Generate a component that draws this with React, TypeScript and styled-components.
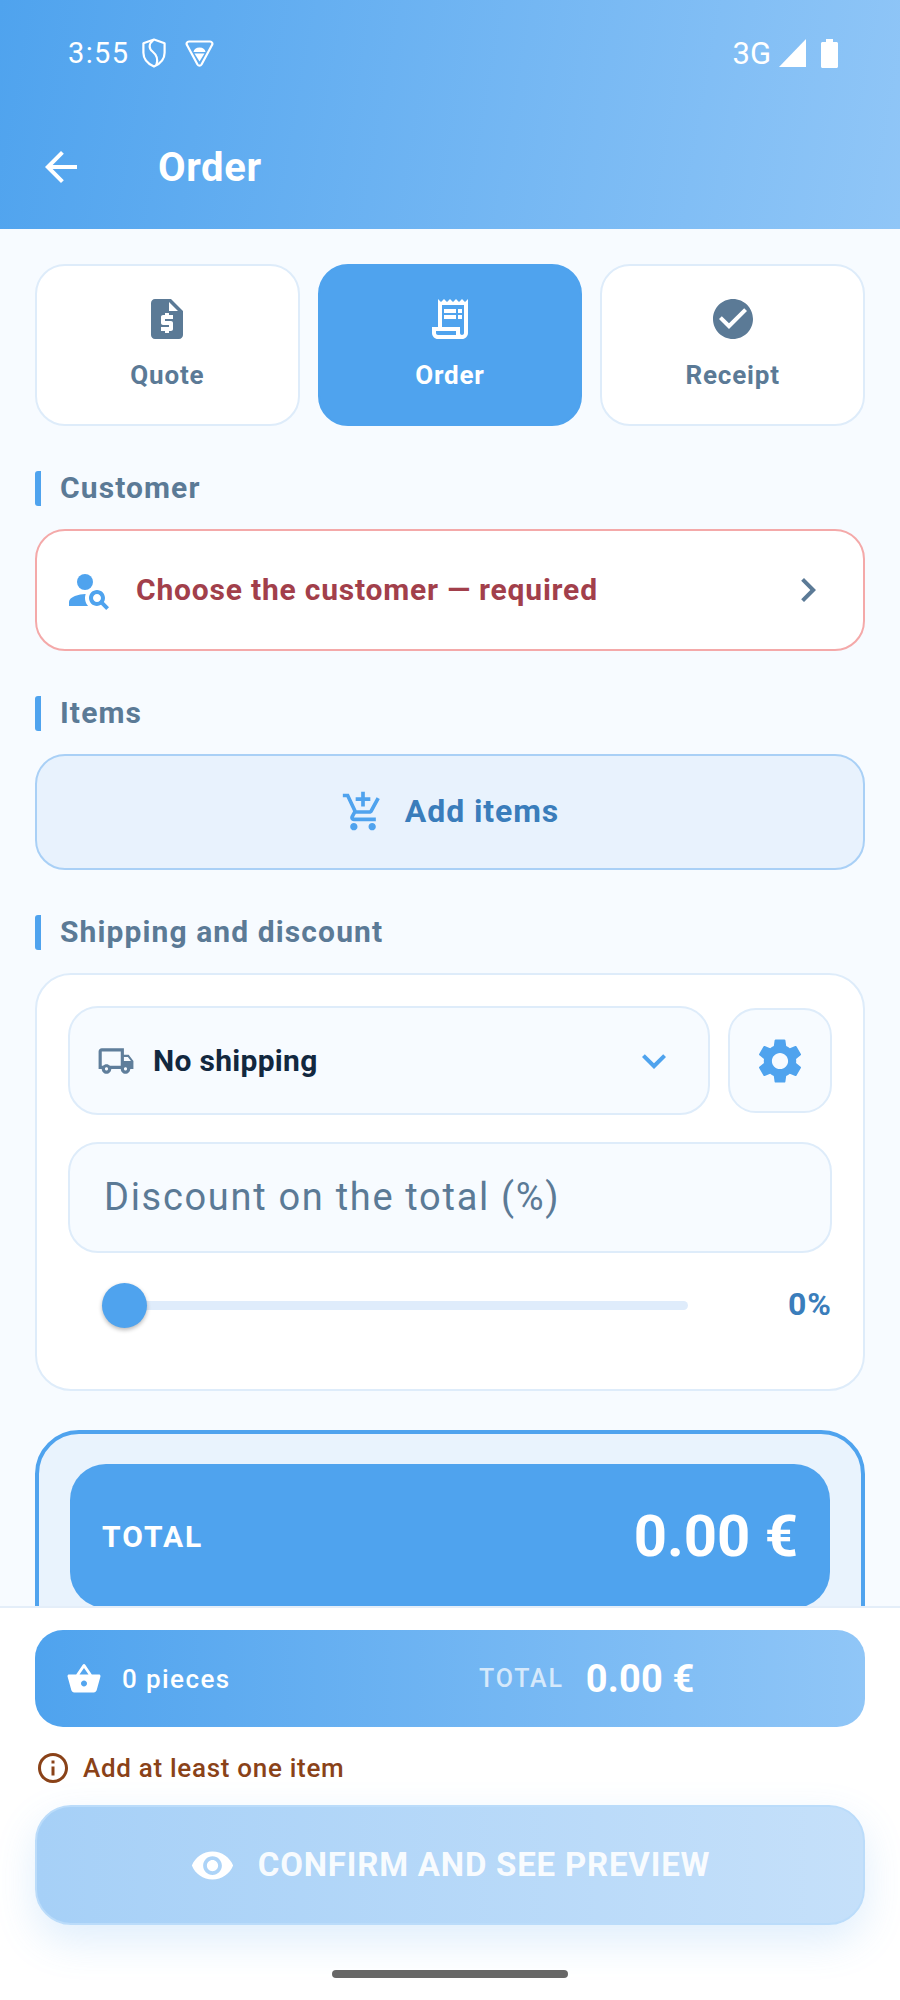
import React from "react";
import styled, { createGlobalStyle } from "styled-components";
import {
  MdArrowBack,
  MdCheckCircle,
  MdChevronRight,
  MdInfoOutline,
  MdKeyboardArrowDown,
  MdOutlineAddShoppingCart,
  MdOutlineLocalShipping,
  MdOutlineReceiptLong,
  MdPersonSearch,
  MdRequestQuote,
  MdSettings,
  MdShoppingBasket,
  MdVisibility,
} from "react-icons/md";

const GlobalStyle = createGlobalStyle`
  html, body {
    margin: 0;
    padding: 0;
    background: #fff;
  }
  * {
    box-sizing: border-box;
  }
`;

const tabs = [
  { label: "Quote", icon: MdRequestQuote },
  { label: "Order", icon: MdOutlineReceiptLong, active: true },
  { label: "Receipt", icon: MdCheckCircle },
];

const ShieldIcon = () => (
  <svg width="24" height="30" viewBox="0 0 24 30" fill="none" stroke="#fff" strokeWidth="2.2" strokeLinejoin="round" strokeLinecap="round">
    <path d="M12 1.5 22.6 5.2v9.6c0 6.4-4.4 11-10.6 13.8C5.800 25.800 1.400 21.200 1.400 14.800V5.200Z" />
    <path d="M11 2.500C6.500 6 6.800 10.500 10.500 13.500 14.500 16.800 16.500 20.500 14.500 26.500" />
  </svg>
);

const AndroidBadgeIcon = () => (
  <svg width="29" height="27" viewBox="0 0 29 27" fill="none">
    <path d="M4 1.500H25c2 0 3 2 2 3.600L16.500 24.500c-1 1.600-3 1.600-4 0L2 5.100C1 3.500 2 1.500 4 1.500Z" stroke="#fff" strokeWidth="2.200" strokeLinejoin="round" />
    <path d="M8.500 12C9 9 11 7.500 14.500 7.500S20 9 20.500 12Z" fill="#fff" />
    <path d="M9.500 13.500H19.500L14.500 21.500Z" fill="#fff" />
  </svg>
);

const SignalIcon = () => (
  <svg width="27" height="28" viewBox="0 0 27 28">
    <path d="M27 0V28H0Z" fill="#fff" />
  </svg>
);

const BatteryIcon = () => (
  <svg width="17" height="29" viewBox="0 0 17 29">
    <path d="M5 0H12V3H15.500C16.300 3 17 3.700 17 4.500V27.500C17 28.300 16.300 29 15.500 29H1.500C.7 29 0 28.300 0 27.500V4.500C0 3.700 .7 3 1.500 3H5Z" fill="#fff" />
  </svg>
);

export default function App() {
  return (
    <>
      <GlobalStyle />
      <Page>
        <Header>
          <StatusBar>
            <StatusLeft>
              <Clock>3:55</Clock>
              <ShieldIcon />
              <AndroidBadgeIcon />
            </StatusLeft>
            <StatusRight>
              <Network>3G</Network>
              <SignalIcon />
              <BatteryIcon />
            </StatusRight>
          </StatusBar>
          <AppBar>
            <MdArrowBack size={48} color="#fff" />
            <Title>Order</Title>
          </AppBar>
        </Header>

        <Main>
          <Tabs>
            {tabs.map((tab) => (
              <Tab key={tab.label} $active={tab.active}>
                <tab.icon size={48} />
                <TabLabel>{tab.label}</TabLabel>
              </Tab>
            ))}
          </Tabs>

          <SectionLabel>Customer</SectionLabel>
          <CustomerRow>
            <MdPersonSearch size={48} color="#4FA3EE" />
            <CustomerText>Choose the customer — required</CustomerText>
            <MdChevronRight size={48} color="#5B7A96" />
          </CustomerRow>

          <SectionLabel>Items</SectionLabel>
          <AddItems>
            <MdOutlineAddShoppingCart size={44} color="#4FA3EE" />
            <AddItemsText>Add items</AddItemsText>
          </AddItems>

          <SectionLabel>Shipping and discount</SectionLabel>
          <ShippingCard>
            <ShippingRow>
              <ShippingSelect>
                <MdOutlineLocalShipping size={38} color="#5F7E9B" />
                <ShippingText>No shipping</ShippingText>
                <MdKeyboardArrowDown size={48} color="#4FA3EE" />
              </ShippingSelect>
              <GearButton>
                <MdSettings size={54} color="#4FA3EE" />
              </GearButton>
            </ShippingRow>
            <DiscountField>Discount on the total (%)</DiscountField>
            <SliderRow>
              <SliderTrack>
                <SliderThumb />
              </SliderTrack>
              <SliderValue>0%</SliderValue>
            </SliderRow>
          </ShippingCard>

          <TotalCard>
            <TotalBanner>
              <TotalLabel>TOTAL</TotalLabel>
              <TotalValue>0.00 €</TotalValue>
            </TotalBanner>
          </TotalCard>
        </Main>

        <Footer>
          <Summary>
            <SummaryPieces>
              <MdShoppingBasket size={36} color="#fff" />
              <PiecesText>0 pieces</PiecesText>
            </SummaryPieces>
            <SummaryTotalLabel>TOTAL</SummaryTotalLabel>
            <SummaryTotalValue>0.00 €</SummaryTotalValue>
          </Summary>
          <Warning>
            <MdInfoOutline size={36} color="#8A4218" />
            <WarningText>Add at least one item</WarningText>
          </Warning>
          <ConfirmButton>
            <MdVisibility size={45} color="#fff" />
            <ConfirmText>CONFIRM AND SEE PREVIEW</ConfirmText>
          </ConfirmButton>
          <HomeIndicator />
        </Footer>
      </Page>
    </>
  );
}

const Page = styled.div`
  width: 900px;
  height: 2000px;
  display: flex;
  flex-direction: column;
  overflow: hidden;
  background: #f7fbff;
  font-family: Roboto, "Liberation Sans", sans-serif;
`;

const Header = styled.header`
  flex: 0 0 229px;
  background: linear-gradient(100deg, #4fa3ee 0%, #90c6f7 100%);
  color: #fff;
`;

const StatusBar = styled.div`
  height: 137px;
  padding: 36px 62px 0 68px;
  display: flex;
  justify-content: space-between;
  align-items: flex-start;
`;

const StatusLeft = styled.div`
  height: 34px;
  display: flex;
  align-items: center;
  gap: 12px;

  svg:last-child {
    margin-left: 7px;
  }
`;

const Clock = styled.span`
  font-size: 29px;
  letter-spacing: 1.4px;
`;

const StatusRight = styled.div`
  height: 34px;
  display: flex;
  align-items: center;
  gap: 8px;

  svg:last-child {
    margin-left: 7px;
  }
`;

const Network = styled.span`
  font-size: 31px;
`;

const AppBar = styled.div`
  height: 60px;
  padding-left: 37px;
  display: flex;
  align-items: center;
  gap: 73px;
`;

const Title = styled.h1`
  margin: 0;
  font-size: 40px;
  font-weight: 700;
  letter-spacing: 0.6px;
`;

const Main = styled.main`
  flex: 1;
  min-height: 0;
  overflow: hidden;
  padding: 35px 35px 0;
`;

const Tabs = styled.div`
  display: grid;
  grid-template-columns: repeat(3, 1fr);
  gap: 18px;
`;

const Tab = styled.div<{ $active?: boolean }>`
  height: 162px;
  padding-top: 29px;
  display: flex;
  flex-direction: column;
  align-items: center;
  gap: 16px;
  border-radius: 30px;
  border: 2px solid ${(p) => (p.$active ? "#4fa3ee" : "#deecfa")};
  background: ${(p) => (p.$active ? "#4fa3ee" : "#fff")};
  color: ${(p) => (p.$active ? "#fff" : "#5b7a96")};
`;

const TabLabel = styled.span`
  font-size: 26px;
  line-height: 32px;
  font-weight: 700;
  letter-spacing: 0.8px;
`;

const SectionLabel = styled.div`
  height: 35px;
  margin: 45px 0 23px;
  padding: 0 0 2px 19px;
  border-left: 6px solid #4fa3ee;
  border-radius: 3px;
  display: flex;
  align-items: center;
  font-size: 30px;
  font-weight: 700;
  letter-spacing: 1.1px;
  color: #5b7a96;
`;

const CustomerRow = styled.div`
  height: 122px;
  padding: 0 31px 0 28px;
  display: flex;
  align-items: center;
  gap: 23px;
  background: #fff;
  border: 2px solid #f4a9a9;
  border-radius: 30px;
`;

const CustomerText = styled.span`
  flex: 1;
  padding-bottom: 2px;
  font-size: 30px;
  font-weight: 700;
  letter-spacing: 0.8px;
  color: #a23f4b;
`;

const AddItems = styled.div`
  height: 116px;
  display: flex;
  align-items: center;
  justify-content: center;
  gap: 20px;
  background: #e8f2fd;
  border: 2px solid #a9d0f6;
  border-radius: 30px;
`;

const AddItemsText = styled.span`
  padding-bottom: 3px;
  font-size: 32px;
  font-weight: 700;
  letter-spacing: 0.9px;
  color: #3a7dbb;
`;

const ShippingCard = styled.section`
  height: 418px;
  padding: 31px 31px 0;
  background: #fff;
  border: 2px solid #deecfa;
  border-radius: 36px;
`;

const ShippingRow = styled.div`
  display: flex;
  align-items: center;
  gap: 18px;
`;

const ShippingSelect = styled.div`
  flex: 1;
  height: 109px;
  padding: 0 30px 0 27px;
  display: flex;
  align-items: center;
  gap: 18px;
  background: #f7fbff;
  border: 2px solid #deecfa;
  border-radius: 30px;
`;

const ShippingText = styled.span`
  flex: 1;
  font-size: 30px;
  font-weight: 700;
  letter-spacing: 0.3px;
  color: #12283f;
`;

const GearButton = styled.div`
  flex: 0 0 104px;
  height: 105px;
  display: flex;
  align-items: center;
  justify-content: center;
  background: #f7fbff;
  border: 2px solid #deecfa;
  border-radius: 28px;
`;

const DiscountField = styled.div`
  height: 111px;
  margin-top: 27px;
  padding: 0 34px 2px;
  display: flex;
  align-items: center;
  background: #f7fbff;
  border: 2px solid #deecfa;
  border-radius: 30px;
  font-size: 38px;
  letter-spacing: 1.7px;
  color: #5b7a96;
`;

const SliderRow = styled.div`
  height: 44px;
  margin-top: 30px;
  display: flex;
  align-items: center;
  justify-content: space-between;
`;

const SliderTrack = styled.div`
  position: relative;
  width: 586px;
  height: 9px;
  margin-left: 34px;
  border-radius: 5px;
  background: #dfecfb;
`;

const SliderThumb = styled.div`
  position: absolute;
  left: 0;
  top: -18px;
  width: 45px;
  height: 45px;
  border-radius: 50%;
  background: #4fa3ee;
  box-shadow: 0 2px 4px rgba(0, 0, 0, 0.28);
`;

const SliderValue = styled.span`
  padding-bottom: 2px;
  font-size: 32px;
  font-weight: 700;
  letter-spacing: 1px;
  color: #3a7dbb;
`;

const TotalCard = styled.section`
  height: 300px;
  margin-top: 39px;
  padding: 30px 31px;
  background: #e9f3fd;
  border: 4px solid #4fa3ee;
  border-radius: 44px;
`;

const TotalBanner = styled.div`
  height: 144px;
  padding: 0 32px;
  display: flex;
  align-items: center;
  justify-content: space-between;
  background: #4fa3ee;
  border-radius: 36px;
  color: #fff;
`;

const TotalLabel = styled.span`
  font-size: 30px;
  font-weight: 700;
  letter-spacing: 2px;
`;

const TotalValue = styled.span`
  font-size: 58px;
  font-weight: 700;
`;

const Footer = styled.footer`
  flex: 0 0 394px;
  padding: 22px 35px 0;
  display: flex;
  flex-direction: column;
  background: #fff;
  border-top: 2px solid #e4eef9;
`;

const Summary = styled.div`
  height: 97px;
  padding: 0 31px;
  display: flex;
  align-items: center;
  background: linear-gradient(90deg, #4fa3ee 0%, #90c6f7 100%);
  border-radius: 28px;
  color: #fff;
`;

const SummaryPieces = styled.div`
  flex: 0 0 413px;
  display: flex;
  align-items: center;
  gap: 20px;
`;

const PiecesText = styled.span`
  font-size: 26px;
  font-weight: 500;
  letter-spacing: 1.4px;
`;

const SummaryTotalLabel = styled.span`
  font-size: 25px;
  font-weight: 500;
  letter-spacing: 1.8px;
  opacity: 0.7;
`;

const SummaryTotalValue = styled.span`
  margin-left: 22px;
  font-size: 38px;
  font-weight: 700;
  letter-spacing: 0.2px;
`;

const Warning = styled.div`
  height: 36px;
  margin-top: 23px;
  display: flex;
  align-items: center;
  gap: 12px;
`;

const WarningText = styled.span`
  font-size: 26px;
  font-weight: 500;
  letter-spacing: 0.7px;
  color: #8a4218;
`;

const ConfirmButton = styled.div`
  height: 120px;
  margin-top: 19px;
  flex-shrink: 0;
  display: flex;
  align-items: center;
  justify-content: center;
  gap: 23px;
  background: linear-gradient(90deg, #a6d0f7 0%, #c5e0fa 100%);
  border: 2px solid #bbdcfa;
  border-radius: 36px;
  box-shadow: 0 16px 40px rgba(79, 163, 238, 0.18);
`;

const ConfirmText = styled.span`
  padding-bottom: 2px;
  font-size: 33px;
  font-weight: 700;
  letter-spacing: 0.8px;
  color: rgba(255, 255, 255, 0.92);
`;

const HomeIndicator = styled.div`
  width: 236px;
  height: 8px;
  margin: 45px auto 0;
  flex-shrink: 0;
  border-radius: 4px;
  background: #666;
`;
